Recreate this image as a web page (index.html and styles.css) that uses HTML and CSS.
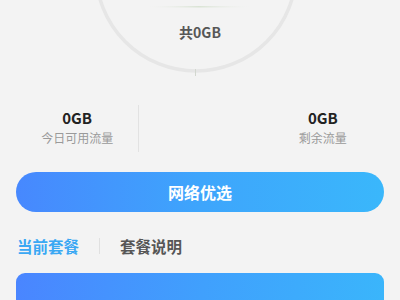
FILE: index.html
```html
<!DOCTYPE html>
<html lang="zh">
<head>
<meta charset="utf-8">
<link rel="stylesheet" href="styles.css">
</head>
<body>
<div class="page">
  <section class="gauge">
    <svg class="gauge-art" width="400" height="100" viewBox="0 0 400 100">
      <defs>
        <linearGradient id="ln" x1="0" x2="1" y1="0" y2="0">
          <stop offset="0" stop-color="#eef0ec" stop-opacity="0"/>
          <stop offset="0.5" stop-color="#d9e3d4"/>
          <stop offset="1" stop-color="#eef0ec" stop-opacity="0"/>
        </linearGradient>
      </defs>
      <circle cx="196" cy="-29" r="100" fill="none" stroke="#e6e6e6" stroke-width="3.5"/>
      <rect x="148" y="6" width="102" height="1.5" fill="url(#ln)"/>
      <rect x="195" y="69" width="1" height="7" fill="#d2d7cf"/>
    </svg>
    <div class="total">共0GB</div>
  </section>
  <section class="stats">
    <div class="stat">
      <div class="val">0GB</div>
      <div class="lbl">今日可用流量</div>
    </div>
    <div class="stat stat-empty"></div>
    <div class="stat">
      <div class="val">0GB</div>
      <div class="lbl">剩余流量</div>
    </div>
  </section>
  <button class="btn">网络优选</button>
  <nav class="tabs">
    <span class="tab active">当前套餐</span>
    <span class="tab-sep"></span>
    <span class="tab">套餐说明</span>
  </nav>
  <div class="card"></div>
</div>
</body>
</html>
```
FILE: styles.css
```css
html, body {
  margin: 0;
  padding: 0;
  background: #f3f3f3;
  overflow: hidden;
}
body {
  font-family: "Noto Sans CJK SC", "Noto Sans", sans-serif;
  width: 400px;
  height: 300px;
}
.page {
  display: flex;
  flex-direction: column;
  padding: 0 16px;
  height: 300px;
  overflow: hidden;
}
.gauge {
  position: relative;
  height: 105px;
  margin: 0 -16px;
  flex-shrink: 0;
}
.gauge-art {
  position: absolute;
  left: 0;
  top: 0;
}
.total {
  position: relative;
  padding-top: 22px;
  text-align: center;
  font-size: 14px;
  line-height: 20px;
  font-weight: 700;
  color: #575757;
}
.stats {
  display: flex;
  height: 47px;
  flex-shrink: 0;
}
.stat {
  flex: 1;
  display: flex;
  flex-direction: column;
  align-items: center;
  padding-top: 3px;
  gap: 2px;
}
.stat:first-child {
  border-right: 1px solid #e2e2e2;
}
.val {
  font-size: 15px;
  line-height: 20px;
  font-weight: 700;
  color: #222;
}
.lbl {
  font-size: 12px;
  line-height: 16px;
  color: #9a9a9a;
}
.btn {
  margin-top: 20px;
  height: 40px;
  flex-shrink: 0;
  border: 0;
  border-radius: 20px;
  background: linear-gradient(90deg, #4788fe 0%, #3ea5fc 50%, #3ab7fb 100%);
  color: #fff;
  font-family: inherit;
  font-size: 16px;
  font-weight: 700;
  padding: 0;
}
.tabs {
  margin-top: 24px;
  display: flex;
  align-items: center;
  height: 20px;
  flex-shrink: 0;
  padding-left: 1px;
}
.tab {
  font-size: 15.5px;
  line-height: 20px;
  font-weight: 700;
  color: #565656;
}
.tab.active {
  color: #3aa8f3;
}
.tab-sep {
  width: 1px;
  height: 16px;
  background: #e0e0e0;
  margin: 0 20px;
}
.card {
  margin-top: 17px;
  height: 60px;
  flex-shrink: 0;
  border-radius: 9px;
  background: linear-gradient(100deg, #4a85ff 0%, #40a0fd 50%, #3ab6fb 100%);
}
```
